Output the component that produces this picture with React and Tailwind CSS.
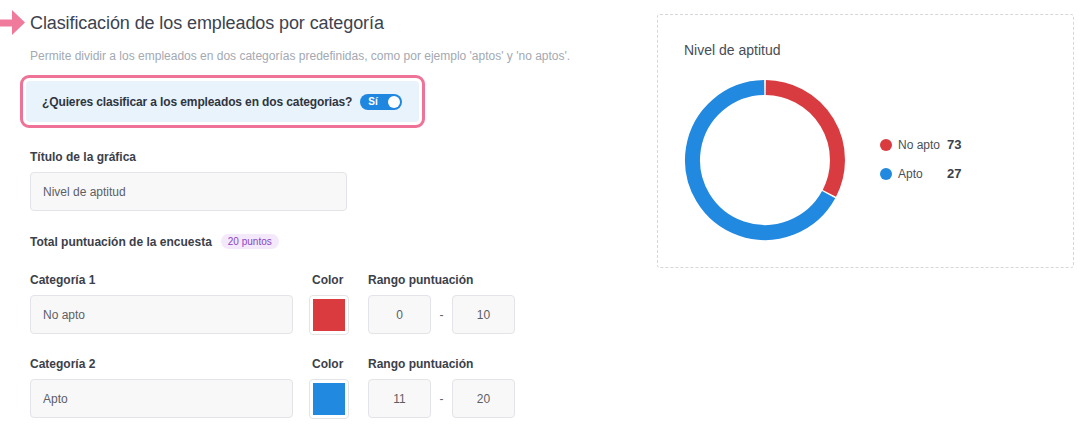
import React from "react";

const F = { fontFamily: '"Liberation Sans", Arial, sans-serif' };

function arcPath(cx, cy, r, a0, a1) {
  const rad = (a) => ((a - 90) * Math.PI) / 180;
  const x0 = cx + r * Math.cos(rad(a0));
  const y0 = cy + r * Math.sin(rad(a0));
  const x1 = cx + r * Math.cos(rad(a1));
  const y1 = cy + r * Math.sin(rad(a1));
  const large = a1 - a0 > 180 ? 1 : 0;
  return `M ${x0} ${y0} A ${r} ${r} 0 ${large} 1 ${x1} ${y1}`;
}

function Donut() {
  const redEnd = 118;
  return (
    <svg width="162" height="162" viewBox="0 0 162 162">
      <path d={arcPath(81, 81, 72.5, 0.6, redEnd - 0.6)} fill="none" stroke="#d93c40" strokeWidth="15" />
      <path d={arcPath(81, 81, 72.5, redEnd + 0.6, 359.4)} fill="none" stroke="#2189df" strokeWidth="15" />
    </svg>
  );
}

function Label({ children, className = "" }) {
  return <div className={`text-[12px] leading-[14px] font-semibold text-[#3b404a] ${className}`}>{children}</div>;
}

function TextInput({ value, className = "" }) {
  return (
    <div className={`h-[39px] bg-[#f8f8f9] border border-[#e3e4e8] rounded-[4px] flex items-center pl-[12px] text-[12px] text-[#5c5f66] ${className}`}>
      {value}
    </div>
  );
}

function CatRow({ label, value, color, a, b }) {
  return (
    <div className="flex">
      <div className="w-[263px]">
        <Label className="h-[14px]">{label}</Label>
        <TextInput value={value} className="mt-[8px]" />
      </div>
      <div className="ml-[16px] w-[40px]">
        <Label className="h-[14px] pl-[3px]">Color</Label>
        <div className="mt-[8px] w-[40px] h-[40px] border border-[#e3e4e8] rounded-[4px] bg-white flex items-center justify-center">
          <div className="w-[32px] h-[32px]" style={{ backgroundColor: color }} />
        </div>
      </div>
      <div className="ml-[19px]">
        <Label className="h-[14px]">Rango puntuación</Label>
        <div className="mt-[8px] flex items-center">
          <div className="w-[63px] h-[39px] bg-[#f8f8f9] border border-[#e3e4e8] rounded-[4px] flex items-center justify-center text-[12px] text-[#5c5f66]">{a}</div>
          <div className="w-[21px] text-center text-[12px] text-[#5c5f66]">-</div>
          <div className="w-[63px] h-[39px] bg-[#f8f8f9] border border-[#e3e4e8] rounded-[4px] flex items-center justify-center text-[12px] text-[#5c5f66]">{b}</div>
        </div>
      </div>
    </div>
  );
}

export default function App() {
  return (
    <div className="w-[1084px] h-[430px] bg-white flex overflow-hidden" style={F}>
      <div className="w-[657px] shrink-0">
        <div className="flex items-center h-[24px] mt-[11px]">
          <svg width="27" height="26" viewBox="0 0 27 26" className="shrink-0">
            <path d="M0 9.5 H12 V0 L25 12.5 L12 25 V16.5 H0 Z" fill="#f07a9b" />
          </svg>
          <div className="ml-[3px] text-[18px] text-[#3c4350] tracking-[-0.1px]">Clasificación de los empleados por categoría</div>
        </div>
        <div className="pl-[30px] mt-[14px] text-[12px] text-[#a3a9b3] leading-[14px]">
          Permite dividir a los empleados en dos categorías predefinidas, como por ejemplo 'aptos' y 'no aptos'.
        </div>
        <div className="ml-[20px] mt-[12px] w-[405px] border-[3px] border-[#ee7397] rounded-[9px] p-[3px]">
          <div className="h-[41px] bg-[#e9f3fb] rounded-[4px] flex items-center pl-[16px]">
            <span className="text-[12px] font-semibold text-[#2f3540] tracking-[-0.12px]">¿Quieres clasificar a los empleados en dos categorias?</span>
            <div className="ml-[8px] w-[42px] h-[16px] rounded-full bg-[#1f87e0] flex items-center justify-between pl-[8px] pr-[2px]">
              <span className="text-[10px] font-bold text-white leading-none">Sí</span>
              <div className="w-[12px] h-[12px] rounded-full bg-white" />
            </div>
          </div>
        </div>
        <div className="pl-[30px]">
          <Label className="mt-[22px]">Título de la gráfica</Label>
          <TextInput value="Nivel de aptitud" className="mt-[8px] w-[317px]" />
          <div className="mt-[23px] flex items-center">
            <Label>Total puntuación de la encuesta</Label>
            <span className="ml-[9px] h-[15px] px-[7px] rounded-full bg-[#f4e9fb] text-[#8b45c2] text-[10px] flex items-center">20 puntos</span>
          </div>
          <div className="mt-[24px]">
            <CatRow label="Categoría 1" value="No apto" color="#d93b3f" a="0" b="10" />
          </div>
          <div className="mt-[22px]">
            <CatRow label="Categoría 2" value="Apto" color="#2189df" a="11" b="20" />
          </div>
        </div>
      </div>
      <div className="mt-[14px] w-[417px] h-[254px] border border-dashed border-[#d6d7da] rounded-[3px] pl-[26px] pt-[26px]">
        <div className="text-[14px] text-[#474c55] leading-[18px]">Nivel de aptitud</div>
        <div className="flex items-center mt-[20px]">
          <div>
            <Donut />
          </div>
          <div className="ml-[34px] flex flex-col gap-[13px] -mt-[2px]">
            <div className="flex items-center h-[16px]">
              <div className="w-[12px] h-[12px] rounded-full bg-[#d93b3f]" />
              <span className="ml-[6px] w-[49px] text-[12px] text-[#4a4f58]">No apto</span>
              <span className="text-[13px] font-semibold text-[#3b404a]">73</span>
            </div>
            <div className="flex items-center h-[16px]">
              <div className="w-[12px] h-[12px] rounded-full bg-[#2189df]" />
              <span className="ml-[6px] w-[49px] text-[12px] text-[#4a4f58]">Apto</span>
              <span className="text-[13px] font-semibold text-[#3b404a]">27</span>
            </div>
          </div>
        </div>
      </div>
    </div>
  );
}
